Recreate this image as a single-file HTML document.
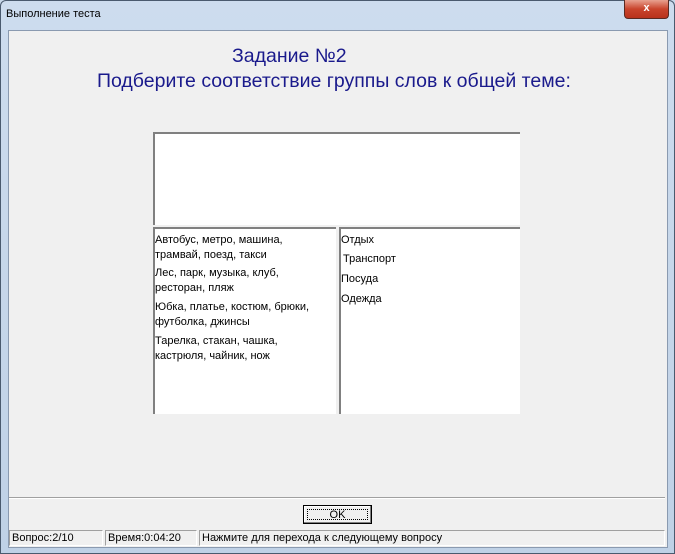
<!DOCTYPE html>
<html><head><meta charset="utf-8"><style>
body{margin:0;width:675px;height:554px;overflow:hidden;background:#c8d8ea;font-family:"Liberation Sans",sans-serif;position:relative}
.frame{position:absolute;left:0;top:0;width:673px;height:552px;border:1px solid #4a5a6e;border-radius:6px 6px 0 0;background:linear-gradient(#cddcee,#bfd1e6)}
.title{position:absolute;left:6px;top:8px;font-size:11px;color:#000}
.close{position:absolute;left:624px;top:0;width:43px;height:18px;background:linear-gradient(#e8a190,#c9442c 50%,#b8321c);border:1px solid #5a2a22;border-top:none;border-radius:0 0 4px 4px;color:#fff;font-weight:bold;font-size:11px;text-align:center;line-height:17px}
.client{position:absolute;left:8px;top:30px;width:658px;height:516px;background:#f0f0f0;border:1px solid #8a9ab0}
.h{position:absolute;color:#1a1a8c;font-size:19.5px;white-space:nowrap}
.box{position:absolute;background:#fff;border-top:2px solid #808080;border-left:2px solid #808080;box-sizing:border-box}
.t{position:absolute;font-size:11px;line-height:15px;color:#000;white-space:nowrap}
.sep{position:absolute;left:9px;top:497px;width:656px;border-top:1px solid #a0a0a0;border-bottom:1px solid #fff}
.ok{position:absolute;left:303px;top:505px;width:69px;height:19px;box-sizing:border-box;border:1px solid #000;background:#f0f0f0;box-shadow:inset -1px -1px #808080,inset 1px 1px #fff}
.ok span{position:absolute;left:3px;top:3px;right:3px;bottom:3px;border:1px dotted #000;font-size:11px;text-align:center;line-height:11px}
.sb{position:absolute;top:530px;height:16px;border-top:1px solid #a0a0a0;border-left:1px solid #a0a0a0;border-right:1px solid #fff;border-bottom:1px solid #fff;box-sizing:border-box;font-size:11px;line-height:14px;padding-left:2px;white-space:nowrap}
</style></head><body>
<div class="frame"></div>
<div class="title">Выполнение теста</div>
<div class="close">x</div>
<div class="client"></div>
<div class="h" style="left:232px;top:45px">Задание №2</div>
<div class="h" style="left:97px;top:70px">Подберите соответствие группы слов к общей теме:</div>
<div class="box" style="left:153px;top:132px;width:367px;height:93px"></div>
<div class="box" style="left:153px;top:227px;width:183px;height:187px"></div>
<div class="box" style="left:339px;top:227px;width:181px;height:187px"></div>
<div class="t" style="left:155px;top:233px">Автобус, метро, машина,<br>трамвай, поезд, такси</div>
<div class="t" style="left:155px;top:266px">Лес, парк, музыка, клуб,<br>ресторан, пляж</div>
<div class="t" style="left:155px;top:300px">Юбка, платье, костюм, брюки,<br>футболка, джинсы</div>
<div class="t" style="left:155px;top:334px">Тарелка, стакан, чашка,<br>кастрюля, чайник, нож</div>
<div class="t" style="left:341px;top:233px">Отдых</div>
<div class="t" style="left:343px;top:252px">Транспорт</div>
<div class="t" style="left:341px;top:272px">Посуда</div>
<div class="t" style="left:341px;top:292px">Одежда</div>
<div class="sep"></div>
<div class="ok"><span>OK</span></div>
<div class="sb" style="left:9px;width:94px">Вопрос:2/10</div>
<div class="sb" style="left:105px;width:92px">Время:0:04:20</div>
<div class="sb" style="left:199px;width:466px">Нажмите для перехода к следующему вопросу</div>
</body></html>
